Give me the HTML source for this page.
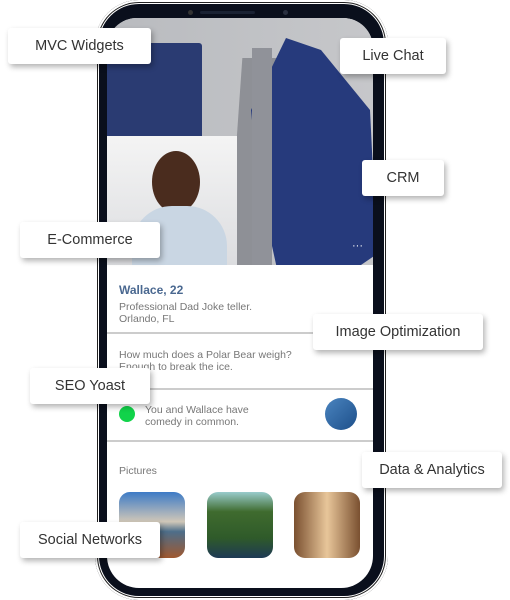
<!DOCTYPE html><html><head><style>
body{margin:0;width:510px;height:600px;background:#fff;position:relative;overflow:hidden;font-family:"Liberation Sans",sans-serif}
.ph{position:absolute;left:95px;top:0;width:293px;height:600px;border-radius:44px;background:#0a0f1c;box-shadow:inset 0 0 0 2px #fff,inset 0 0 0 3px #222,inset 0 0 0 4px #fff}
.scr{position:absolute;left:107px;top:18px;width:266px;height:570px;border-radius:30px 30px 32px 32px;background:#fff;overflow:hidden}
.top{position:absolute;left:0;top:0;width:266px;height:247px;background:linear-gradient(90deg,#b9bbbf,#c6c7ca);overflow:hidden}
.lb{position:absolute;background:#fff;border-radius:3px;box-shadow:2px 3px 6px rgba(0,0,0,.3);font-size:14.5px;color:#333;display:flex;align-items:center;justify-content:center;height:36px}
.t{position:absolute;font-size:10.5px;color:#777;line-height:12px}
.hr{position:absolute;left:0;width:266px;height:2px;background:#ccc}
.pic{position:absolute;top:474px;width:66px;height:66px;border-radius:11px}
</style></head><body>
<div class="ph"></div>
<div style="position:absolute;left:200px;top:11px;width:55px;height:3px;border-radius:2px;background:#1a2233"></div>
<div style="position:absolute;left:188px;top:10px;width:5px;height:5px;border-radius:50%;background:#333"></div>
<div style="position:absolute;left:283px;top:10px;width:5px;height:5px;border-radius:50%;background:#2a3040"></div>
<div class="scr">
<div class="top">
<div style="position:absolute;left:-5px;top:25px;width:100px;height:105px;background:#2a3b72;border-radius:3px"></div>
<div style="position:absolute;left:128px;top:40px;width:40px;height:210px;background:#8e9096;transform:skewX(-4deg)"></div>
<div style="position:absolute;left:130px;top:20px;width:140px;height:240px;background:#263a7c;clip-path:polygon(35% 0,60% 5%,95% 30%,100% 90%,75% 100%,30% 100%,15% 60%,10% 30%)"></div>
<div style="position:absolute;left:145px;top:30px;width:20px;height:220px;background:#909299"></div>
<div style="position:absolute;left:0;top:118px;width:130px;height:129px;background:linear-gradient(#f4f4f4,#dcdde0)"></div>
<div style="position:absolute;left:45px;top:133px;width:48px;height:62px;border-radius:50%;background:#4a2c1e"></div>
<div style="position:absolute;left:25px;top:188px;width:95px;height:60px;border-radius:40px 40px 0 0;background:#c9d6e3"></div>
<div style="position:absolute;right:10px;top:222px;color:#fff;font-size:11px">···</div>
</div>
<div class="t" style="top:266px;left:12px;font-size:12px;font-weight:bold;color:#4a6890">Wallace, 22</div>
<div class="t" style="top:283px;left:12px">Professional Dad Joke teller.<br>Orlando, FL</div>
<div class="hr" style="top:314px"></div>
<div class="t" style="top:331px;left:12px">How much does a Polar Bear weigh?<br>Enough to break the ice.</div>
<div class="hr" style="top:370px"></div>
<div style="position:absolute;left:12px;top:388px;width:16px;height:16px;border-radius:50%;background:#11d34a"></div>
<div class="t" style="top:386px;left:38px">You and Wallace have<br>comedy in common.</div>
<div style="position:absolute;left:218px;top:380px;width:32px;height:32px;border-radius:50%;background:linear-gradient(135deg,#4a84bf,#1d4f8a)"></div>
<div class="hr" style="top:422px"></div>
<div class="t" style="top:447px;left:12px">Pictures</div>
<div class="pic" style="left:12px;background:linear-gradient(#3d7bc6,#d0c7b8 45%,#4d6e8a 60%,#a0582f)"></div>
<div class="pic" style="left:100px;background:linear-gradient(#9cc,#3f6b2e 30%,#2f5a2a 70%,#1e3a55)"></div>
<div class="pic" style="left:187px;background:linear-gradient(90deg,#7a5030,#e8c69a 50%,#7a5030)"></div>
</div>
<div class="lb" style="left:8px;top:28px;width:143px">MVC Widgets</div>
<div class="lb" style="left:340px;top:38px;width:106px">Live Chat</div>
<div class="lb" style="left:362px;top:160px;width:82px">CRM</div>
<div class="lb" style="left:20px;top:222px;width:140px">E-Commerce</div>
<div class="lb" style="left:313px;top:314px;width:170px">Image Optimization</div>
<div class="lb" style="left:30px;top:368px;width:120px">SEO Yoast</div>
<div class="lb" style="left:362px;top:452px;width:140px">Data &amp; Analytics</div>
<div class="lb" style="left:20px;top:522px;width:140px">Social Networks</div>
</body></html>
